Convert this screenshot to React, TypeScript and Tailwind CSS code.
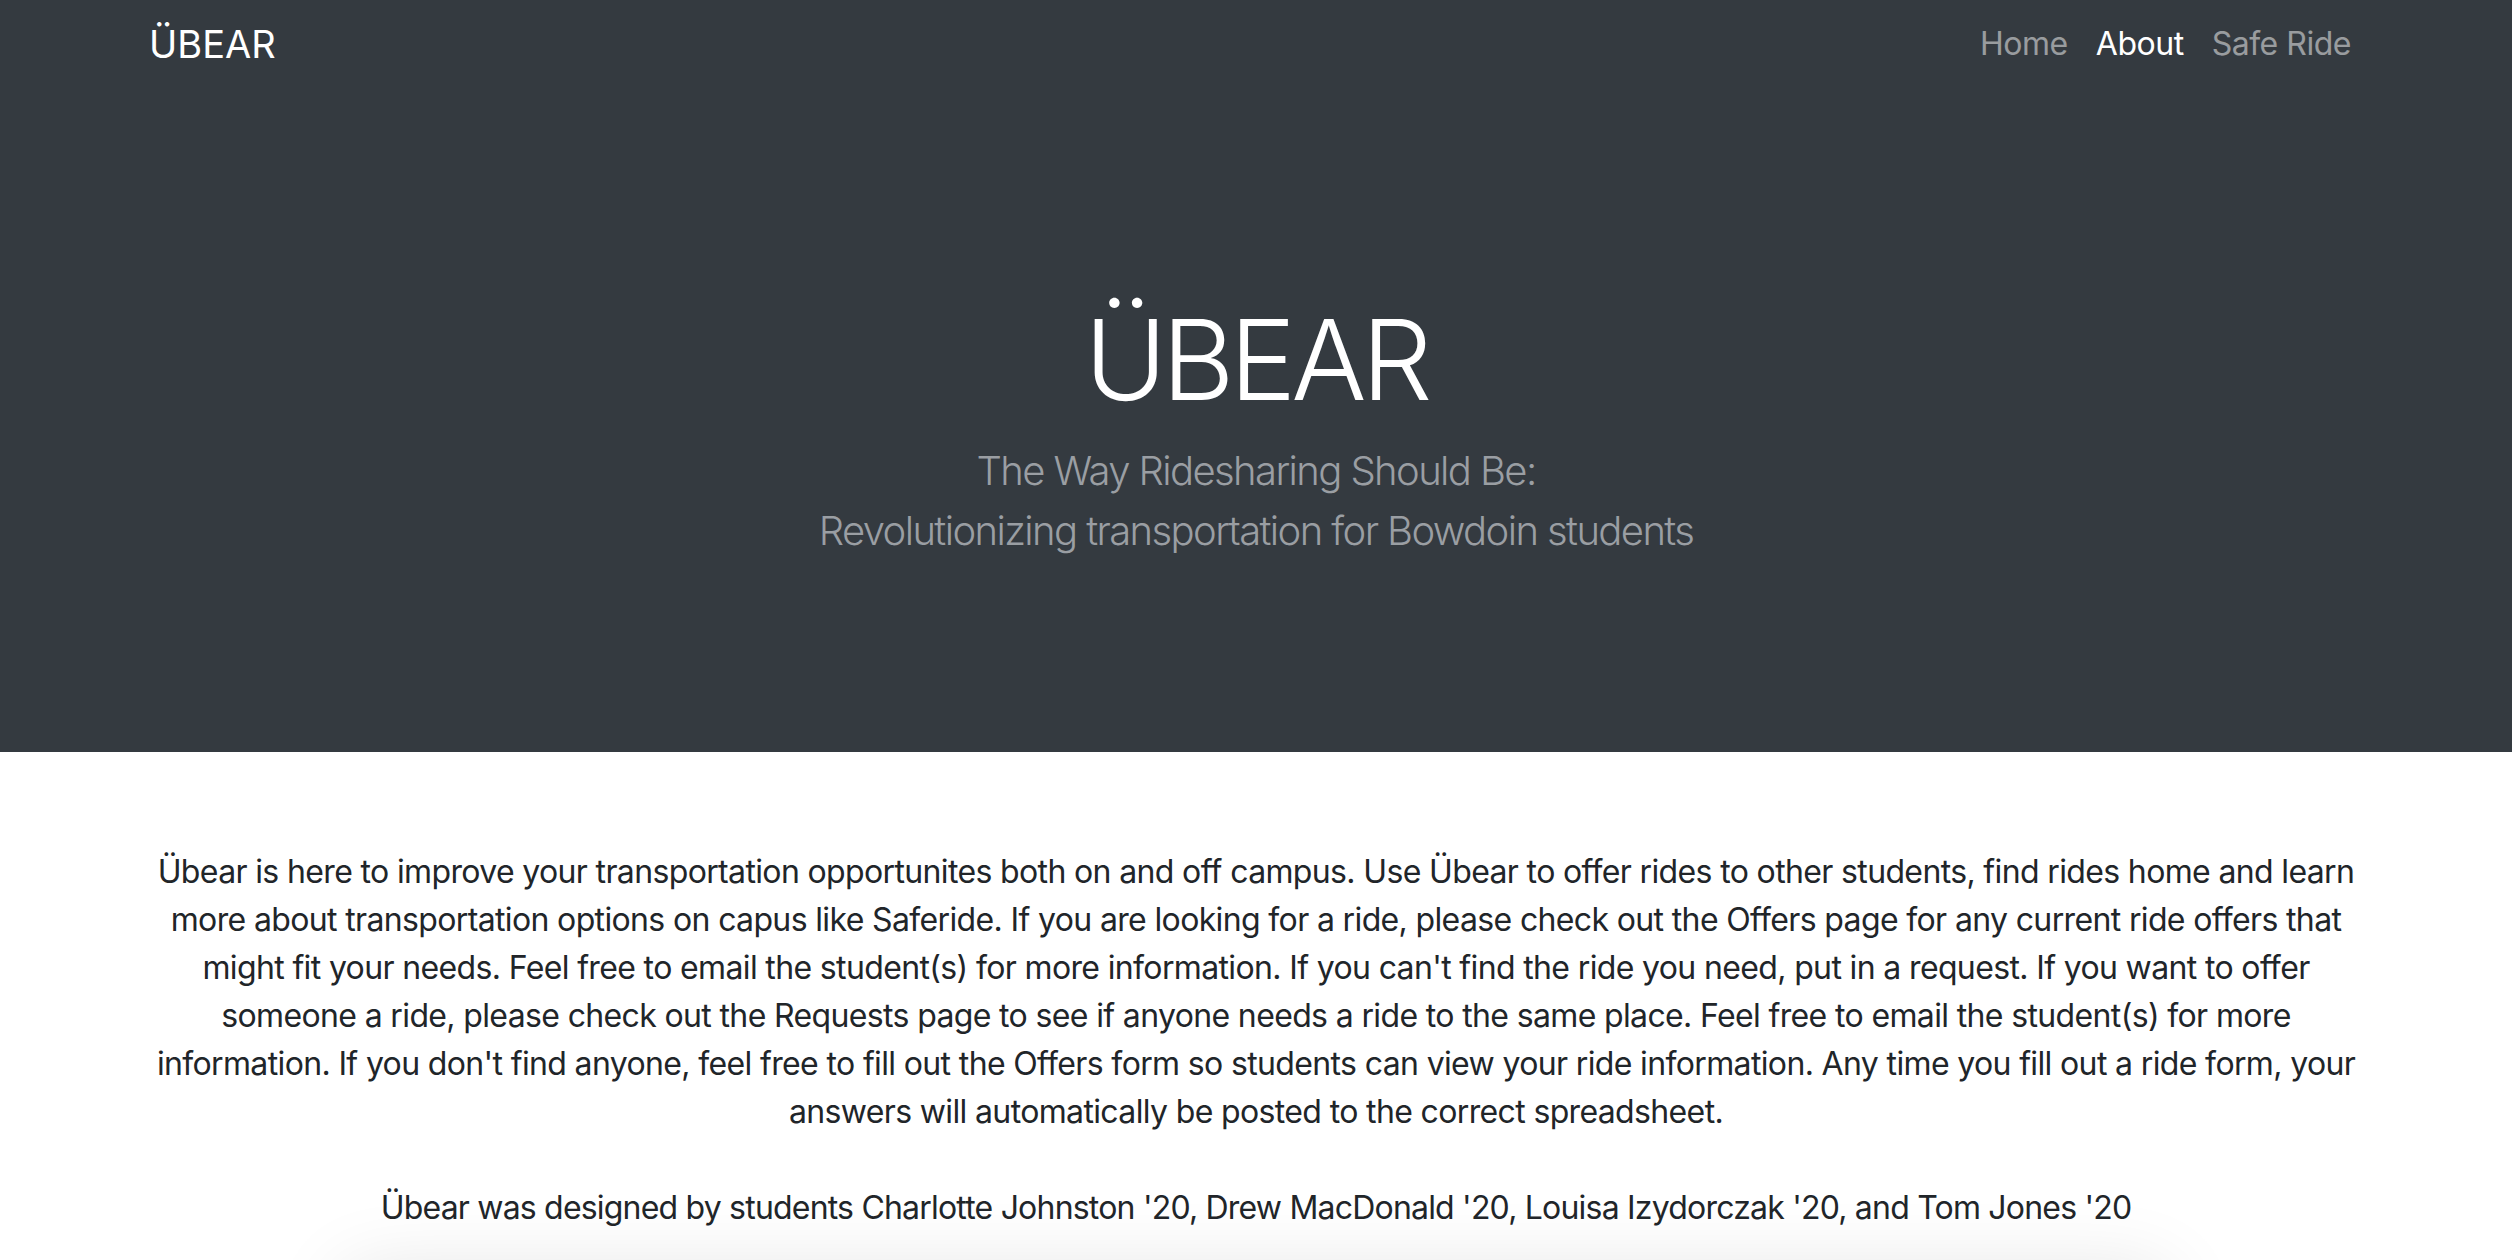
import React from "react";

const lines = [
  "Übear is here to improve your transportation opportunites both on and off campus. Use Übear to offer rides to other students, find rides home and learn",
  "more about transportation options on capus like Saferide. If you are looking for a ride, please check out the Offers page for any current ride offers that",
  "might fit your needs. Feel free to email the student(s) for more information. If you can't find the ride you need, put in a request. If you want to offer",
  "someone a ride, please check out the Requests page to see if anyone needs a ride to the same place. Feel free to email the student(s) for more",
  "information. If you don't find anyone, feel free to fill out the Offers form so students can view your ride information. Any time you fill out a ride form, your",
  "answers will automatically be posted to the correct spreadsheet.",
];

export default function App() {
  return (
    <div
      className="min-h-screen bg-white text-[#212529]"
      style={{ fontFamily: "Inter, 'Noto Sans', sans-serif" }}
    >
      {/* Navbar + hero share the dark background */}
      <div className="bg-[#343a40]">
        <nav className="h-[88px] flex items-center justify-between pl-[149px] pr-[161px]">
          <a className="text-[38px] text-white leading-none">ÜBEAR</a>
          <ul className="flex items-center text-[32px] leading-none tracking-[-0.015em]">
            <li className="px-[14px] text-white/50">Home</li>
            <li className="px-[14px] text-white">About</li>
            <li className="pl-[14px] text-white/50">Safe Ride</li>
          </ul>
        </nav>

        <header className="pt-[204px] pb-[191px] text-center">
          <h1 className="text-[112px] font-light leading-[1.2] tracking-[-0.045em] text-white">ÜBEAR</h1>
          <p className="mt-[15px] text-[40px] font-light leading-[60px] tracking-[-0.04em] text-[#9a9ea3]">
            The Way Ridesharing Should Be:
            <br />
            Revolutionizing transportation for Bowdoin students
          </p>
        </header>
      </div>

      {/* About text */}
      <main className="pt-[96px] text-center text-[32px] leading-[48px] tracking-[-0.02em]">
        <p>
          {lines.map((l) => (
            <span key={l} className="block whitespace-nowrap">
              {l}
            </span>
          ))}
        </p>
        <p className="mt-[48px] tracking-[-0.025em]">
          Übear was designed by students Charlotte Johnston '20, Drew MacDonald '20, Louisa Izydorczak '20, and Tom Jones '20
        </p>
        <div className="mx-auto mt-[42px] h-[300px] w-[1820px] rounded-lg bg-white shadow-[0_0_80px_rgba(0,0,0,0.12)]"></div>
      </main>
    </div>
  );
}
